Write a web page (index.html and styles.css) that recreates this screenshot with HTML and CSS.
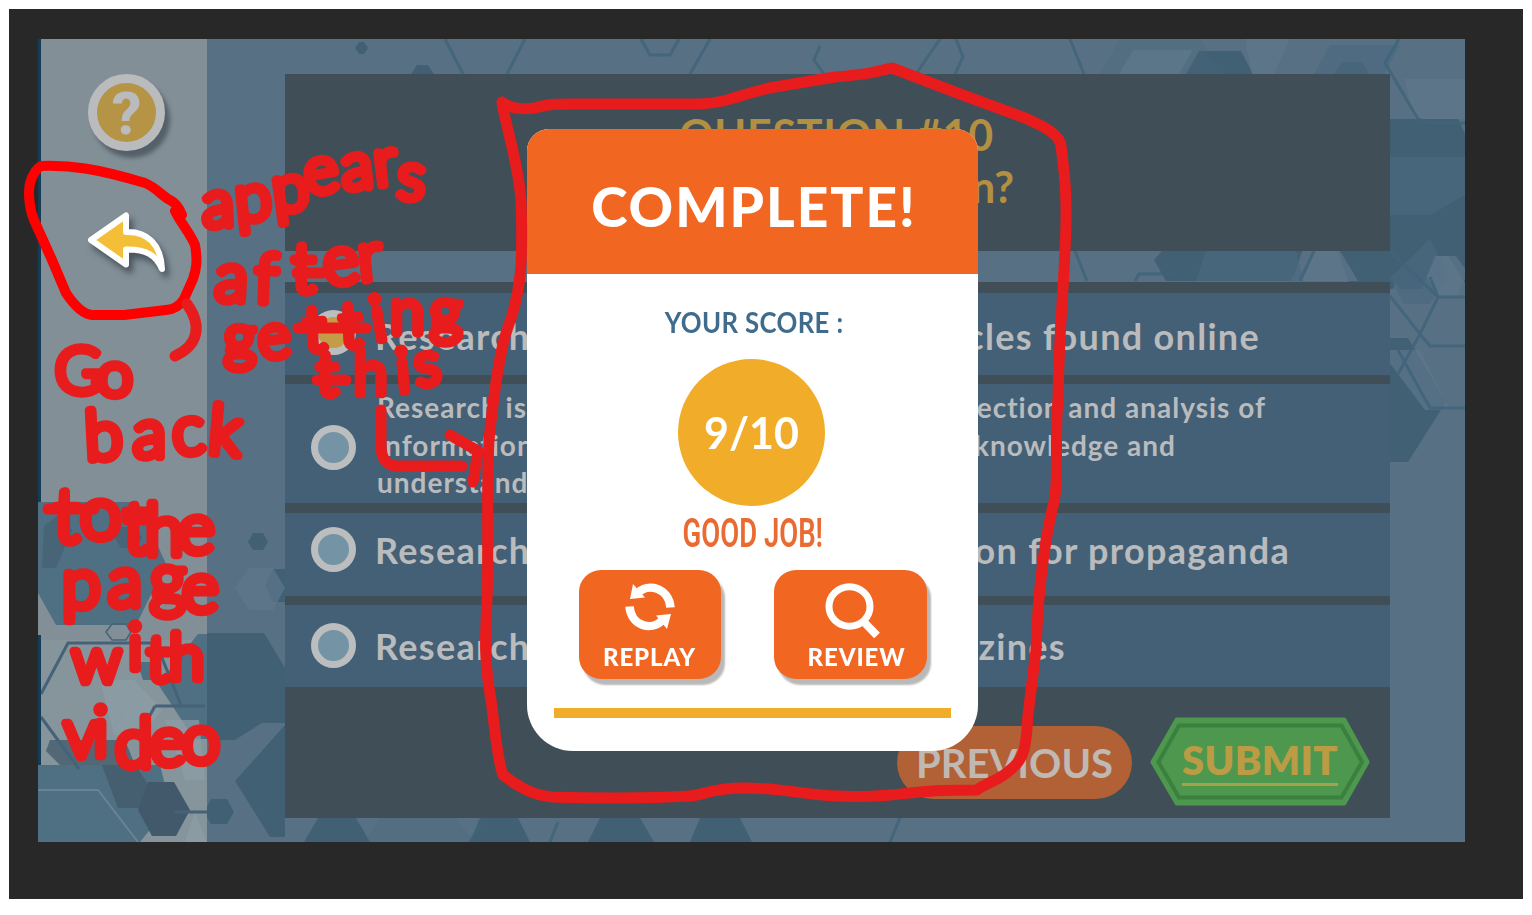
FILE: index.html
```html
<!DOCTYPE html>
<html lang="en">
<head>
<meta charset="utf-8">
<title>Quiz complete</title>
<link rel="stylesheet" href="styles.css">
</head>
<body>
<div class="frame">
  <div class="stage">
    <svg class="pattern" viewBox="38 39 1427 803" aria-hidden="true">
      <g fill="#426074">
        <path d="M355 48l4-6h5l4 6-4 6h-5zM411 74l6-9h11l6 9zM1186 74l13-23h42l12 23zM1334 74l8-12h20l7 12z"/>
        <path d="M1390 119h68l7 15v122h-31l-12 33h-22l-10-15zM1154 260l8-9h140l-6 20-6 10H1166zM1338 251h70l-15 38h-42z"/>
        <path d="M1445 251h20v32zM1390 338h18l38 64-38 60h-18z"/>
        <path d="M248 542l5-9h10l5 9-5 8h-10zM265 585l8-16h12v33h-12zM200 633h64l21 35v55h-23l-27 17h-40l-33-60zM285 725v112h-15l-35-56z"/>
        <path d="M204 812l7-13h16l7 13-7 12h-16zM318 818h38l14 24h-66zM480 818h38l12 24h-60zM600 818h40l14 24h-66zM700 818h40l12 24h-62z"/>
      </g>
      <g fill="#4b6a80" opacity=".65">
        <path d="M1390 157h75v38l-35 20h-40zM1206 251h90l8 30h-108zM1330 45h70l-16 29h-70zM1430 239l18 35-18 30h-26l-14-26z"/>
        <path d="M380 818h75l20 24H365zM1120 39h80l20 35h-120z" opacity=".5"/>
      </g>
      <g fill="#5e778b" opacity=".7">
        <path d="M235 588l14-20h24l12 20-12 22h-24zM1133 50h60l-14 24h-60zM1404 79h61v40h-50zM1245 39h45l-16 35h-22zM1436 256h20l12 17-12 24h-18l-11-20zM1315 251h25l18 30h-58zM1380 350h40l30 60h-25z"/>
      </g>
      <g fill="none" stroke="#3f647b" stroke-width="3" opacity=".85">
        <path d="M445 39l18 35M525 39l-18 35M641 39l9 16h20l9-16M710 39l-20 35M820 46l-6 14 10 14M940 39l-24 35M956 39l7 18-8 17M1070 39l14 35"/>
        <path d="M1399 39l-14 24 33 56 10 4h37M1390 296l30 38 18-37h27M1390 251l48 46-8-20M1420 334l10 12h35M1420 334l-22 40M1398 350l32 58h35M1314 251l-14 30M1075 251l12 30M1135 281l4-7h34"/>
        <path d="M470 842l12-20M890 842l10-24M550 842l8-20"/>
      </g>
    </svg>
    <aside class="sidebar">
      <svg class="sidebar-art" viewBox="38 39 169 803" aria-hidden="true">
        <path fill="#8d9ba4" d="M38 640h169v202H38z" opacity=".4"/>
        <g fill="#4f6f82">
          <path d="M38 502h100l28 62-30 61H56l-18-32z"/>
          <path d="M38 765h122l10 40-30 37H38z"/>
          <path d="M137 662h20l6 18h-20zM198 634h9v105h-13l-36-55z"/>
        </g>
        <g fill="#41596a">
          <path d="M115 538l6-11h14l7 11-7 10h-14zM44 526l18-14 10 18-16 38H42z" opacity=".45"/>
          <path d="M50 740h75l10 25H60l-14-14zM100 760l24-13 36 56-10 5H118z" opacity=".75"/>
          <path d="M148 782h26l16 28-14 26h-24l-14-26z"/>
        </g>
        <g fill="#8e9ea8" opacity=".7"><path d="M100 680h34l28 30-20 25h-28zM165 720h34l6 60h-20zM185 842l10-30 12 30z"/></g>
        <g fill="none" stroke="#456378" stroke-width="3">
          <path d="M41 694l27-51h88l25 62M41 717l38 52M155 706h50M155 706l-14 26M175 812h32"/>
          <path d="M106 632l6-8h14l5 8-5 8h-14z" stroke-width="1.5"/>
          <path d="M38 790h60l40 52M105 740l20-30" stroke="#8398a6" stroke-width="2" opacity=".5"/>
        </g>
        <path fill="#153c55" d="M38 39h3v463h-3zM38 635h3v130h-3z"/>
      </svg>
      <button class="help" aria-label="Help">?</button>
      <svg class="back" viewBox="80 204 96 80" role="img" aria-label="Back">
        <path d="M91 240L126 215.500V232C147 231 161 244 162 269C156 255 146 249 126 249.500V264.500z" fill="#f4bf38" stroke="#fff" stroke-width="6" stroke-linejoin="round"/>
      </svg>
    </aside>
    <main class="quiz">
      <header class="question">
        <h1>QUESTION #10</h1>
        <p>n?</p>
      </header>
      <section class="answers">
        <div class="answer a1"><i class="radio on"></i><div class="line l1"><span>Research</span><span>articles found online</span></div></div>
        <div class="answer a2"><i class="radio"></i><div class="lines">
          <div class="line s1"><span>Research is</span><span>collection and analysis of</span></div>
          <div class="line s2"><span>information</span><span>knowledge and</span></div>
          <div class="line s3"><span>understanding</span></div></div></div>
        <div class="answer a3"><i class="radio"></i><div class="line l3"><span>Research</span><span>information for propaganda</span></div></div>
        <div class="answer a4"><i class="radio"></i><div class="line l4"><span>Research</span><span>magazines</span></div></div>
      </section>
      <footer class="actions">
        <button class="previous"><span>PREVIOUS</span></button>
        <button class="submit">
          <svg viewBox="0 0 220 90" aria-hidden="true">
            <path d="M27 3H194L217 45L194 86H27L3 45z" fill="#4d984e" stroke="#4d984e" stroke-width="5" stroke-linejoin="round"/>
            <path d="M29 8.500H191.500L212 45L191.500 80.500H29L8.500 45z" fill="none" stroke="#3b803e" stroke-width="4"/>
          </svg>
          <span>SUBMIT</span>
        </button>
      </footer>
    </main>
  </div>
</div>

<section class="modal" role="dialog">
  <header><h2>COMPLETE!</h2></header>
  <div class="modal-body">
    <p class="label">YOUR SCORE :</p>
    <div class="score"><span>9/10</span></div>
    <p class="praise">GOOD JOB!</p>
    <div class="choices">
      <button class="choice replay">
        <svg viewBox="0 0 50 48" aria-hidden="true">
          <path d="M12 10.500C23 -1 44 5 45.500 24.500M38 36.500C27 49 6 43 4.500 23.500" fill="none" stroke="#fff" stroke-width="8.500"/>
          <path d="M8 1L5 16L20 14.500zM42 46L46 31L31 32.500z" fill="#fff"/>
        </svg>
        <span>REPLAY</span>
      </button>
      <button class="choice review">
        <svg viewBox="0 0 56 56" aria-hidden="true">
          <ellipse cx="25.500" cy="24.500" rx="20.500" ry="19.800" fill="none" stroke="#fff" stroke-width="7"/>
          <path d="M39 39L53 53.500" stroke="#fff" stroke-width="8"/>
        </svg>
        <span>REVIEW</span>
      </button>
    </div>
    <div class="bar"></div>
  </div>
</section>

<svg class="ink" viewBox="0 0 1532 915">
  <g class="strokes">
    <path class="bright" d="M41 166C70 165 95 168 145 183C157 188 162 196 170 200Q178 204 182 215L175 211C180 222 190 233 195 245C198 262 196 270 193 279L184 299Q178 309 166 310L124 315H92C82 314 72 302 66 293L52 260L34 220C29 208 28 192 30 183Q34 170 41 166z"/>
    <path d="M502 102C512 110 525 109 535 108C550 103 565 104 590 104H700C730 103 745 92 775 87L835 77C870 74 875 72 892 68L960 94L1025 118C1040 125 1060 133 1061 146C1064 170 1068 195 1065 250C1063 300 1059 330 1058 400C1054 440 1060 485 1052 510C1043 550 1038 590 1036 650L1028 715C1026 740 1027 758 1010 770C1000 780 988 782 977 790C935 790 930 791 890 795C820 801 795 788 745 788C710 788 705 795 690 796C640 799 590 798 552 797C530 795 515 784 503 775C497 760 494 720 491 700C484 660 485 640 487 600C489 550 486 500 489 440C493 400 500 350 507 330C522 290 523 260 521 200C518 160 504 120 502 102z"/>
    <path d="M187 304C202 325 199 345 175 356"/>
    <path d="M381 410V445Q381 466 398 466H462M450 435L478 451L473 482"/>
    <path d="M298 328H366M48 509H94M317 380H346M297 273H322M126 512H152M151 652H172"/>
  </g>
  <g class="hand">
    <text font-size="66" x="203 237 275 307 343 376 396" y="227 222 213 195 190 186 198" rotate="-3 -6 -8 -9 -6 -7 4">appears</text>
    <text font-size="68" x="214 254 292 326 360" y="300 302 292 286 281" rotate="3 2 0 -8 -6">after</text>
    <text font-size="62" x="224 260 305 341 375 390 430" y="358 359 351 347 341 333 332" rotate="0 -6 -3 -3 -10 0 0">getting</text>
    <text font-size="60" x="317 354 398 417" y="395 394 392 386" rotate="0 0 -5 -8">this</text>
    <text font-size="64" x="55 97" y="393 396" rotate="0 0">Go</text>
    <text font-size="68" x="86 133 174 207" y="460 457 455 453" rotate="-3 0 -5 5">back</text>
    <text font-size="74" x="54 80" y="542 539">to</text>
    <text font-size="70" x="124 145 178" y="553 555 553">the</text>
    <text font-size="70" x="62 108 150 182" y="608 606 603 612">page</text>
    <text font-size="64" x="72 128 147 169" y="682 669 681 679">with</text>
    <text font-size="68" x="64 93 115 150 182" y="757 756 767 765 763">video</text>
  </g>
</svg>
</body>
</html>
```
FILE: styles.css
```css
* { box-sizing: border-box; }
body { margin: 0; padding: 9px; width: 1532px; height: 915px; overflow: hidden; background: #fff; font-family: Lato, "Open Sans", sans-serif; font-variant-ligatures: none; position: relative; }
h1, h2, p { margin: 0; }
button { border: 0; padding: 0; background: none; font: inherit; }
.frame { width: 1514px; height: 890px; padding: 30px 58px 57px 29px; background: #282828; }
.stage { position: relative; display: flex; width: 1427px; height: 803px; background: #587083; overflow: hidden; }
.pattern { position: absolute; inset: 0; width: 1427px; height: 803px; filter: blur(.6px); }

.sidebar { position: relative; width: 169px; background: #828f97; display: flex; flex-direction: column; align-items: center; padding-top: 35px; }
.sidebar-art { position: absolute; inset: 0; width: 169px; height: 803px; filter: blur(.6px); }
.help { position: relative; width: 77px; height: 77px; margin-left: 8px; border-radius: 50%; border: 9px solid #babbbd; background: #b59445; color: #babbbd; font-family: Roboto, sans-serif; font-size: 59px; font-weight: 800; line-height: 61px; box-shadow: 5px 7px 4px rgba(60, 70, 78, .65); }
.back { position: relative; width: 96px; height: 80px; margin: 53px 0 0 11px; filter: drop-shadow(4px 6px 3px rgba(50, 60, 68, .7)); }

.quiz { position: relative; width: 1105px; margin: 35px 0 0 78px; display: flex; flex-direction: column; }
.question { height: 177px; background: #404e57; color: #b38f42; font-size: 43px; font-weight: 700; line-height: 52px; padding: 35px 93px 0 0; text-align: right; }
.question h1 { font: inherit; letter-spacing: .7px; padding-right: 303px; }
.question p { padding-right: 283px; }
.answers { margin-top: 31px; padding-top: 11px; background: #404e57; display: grid; grid-template-rows: 82px 119px 83px 82px; row-gap: 9.300px; color: #babbbd; }
.answer { display: flex; align-items: center; background: #446076; padding-left: 26px; }
.radio { flex: none; width: 45px; height: 45px; border-radius: 50%; border: 7.500px solid #bcbdbe; background: #7494a6; margin-right: 19px; }
.radio.on { background: #c39c47; }
.line { display: flex; justify-content: space-between; font-size: 36px; font-weight: 700; line-height: 44px; letter-spacing: 1.300px; white-space: nowrap; }
.a1 { padding-bottom: 4px; }
.l1 { width: 885px; margin-top: 7px; }
.a2 .radio { margin-top: 7px; }
.a3 { padding-bottom: 10px; }
.l3 { width: 915px; margin-top: 1px; }
.l4 { width: 691px; margin-top: 1px; }
.lines { margin: 3px 0 0 2px; }
.lines .line { font-size: 28px; line-height: 37.500px; letter-spacing: 1px; }
.s1 { width: 889px; }
.s2 { width: 799px; }
.actions { height: 131px; background: #404e57; display: flex; padding: 30px 20px 0 0; justify-content: flex-end; }
.previous { width: 235px; height: 73px; margin: 9px 18px 0 0; border-radius: 37px; background: #b26136; color: #c0b8b3; font-size: 40px; font-weight: 700; padding-top: 2px; }
.submit { position: relative; width: 220px; height: 90px; color: #bb9c45; font-size: 40px; font-weight: 800; }
.submit svg { position: absolute; inset: 0; width: 220px; height: 90px; }
.submit span { position: relative; display: inline-block; margin-bottom: 2px; border-bottom: 3px solid #a5a34a; line-height: 46px; letter-spacing: .3px; }

.modal { position: absolute; left: 527px; top: 129px; width: 451px; height: 622px; border-radius: 22px 22px 46px 46px; background: #fff; overflow: hidden; }
.modal header { height: 145px; background: #f16722; color: #fff; display: flex; justify-content: center; align-items: center; padding-top: 8px; }
.modal h2 { font-size: 55px; font-weight: 900; line-height: 60px; letter-spacing: 2px; margin-left: 3px; }
.modal-body { display: flex; flex-direction: column; align-items: center; }
.label { margin: 31px 0 0 3px; color: #3f6c8d; font-size: 28px; font-weight: 700; line-height: 34px; letter-spacing: .4px; white-space: nowrap; transform: scaleX(.92); }
.score { width: 147px; height: 147px; margin: 20px 2px 0 0; border-radius: 50%; background: #f1ad29; color: #fff; font-size: 43px; font-weight: 700; display: grid; place-items: center; }
.praise { margin-top: 7px; color: #e96b31; font-family: Roboto, sans-serif; font-size: 41px; font-weight: 600; line-height: 40px; white-space: nowrap; transform: scaleX(.67); }
.choices { display: flex; gap: 53px; margin-top: 17px; }
.choice { display: flex; flex-direction: column; align-items: center; height: 109px; border-radius: 22px; background: #f16722; color: #fff; box-shadow: 4px 6px 2px #b9b9b9; font-size: 24px; font-weight: 900; line-height: 28px; letter-spacing: .9px; }
.replay { width: 142px; padding-top: 13px; }
.replay svg { width: 50px; height: 48px; margin-bottom: 12px; }
.review { width: 153px; padding-top: 12px; }
.review svg { width: 56px; height: 56px; margin: 0 0 5px 3px; }
.review span { margin-left: 13px; }
.bar { width: 397px; height: 10px; margin-top: 29px; background: #f1ad29; }

.ink { position: absolute; inset: 0; width: 1532px; height: 915px; pointer-events: none; }
.strokes path { fill: none; stroke: #e81c1c; stroke-width: 11px; stroke-linecap: round; stroke-linejoin: round; }
.strokes .bright { stroke: #fe0000; stroke-width: 10px; }
.hand text { font-family: Lato, sans-serif; font-weight: 300; fill: #e81c1c; stroke: #e81c1c; stroke-width: 8.500px; stroke-linejoin: round; stroke-linecap: round; }
```
